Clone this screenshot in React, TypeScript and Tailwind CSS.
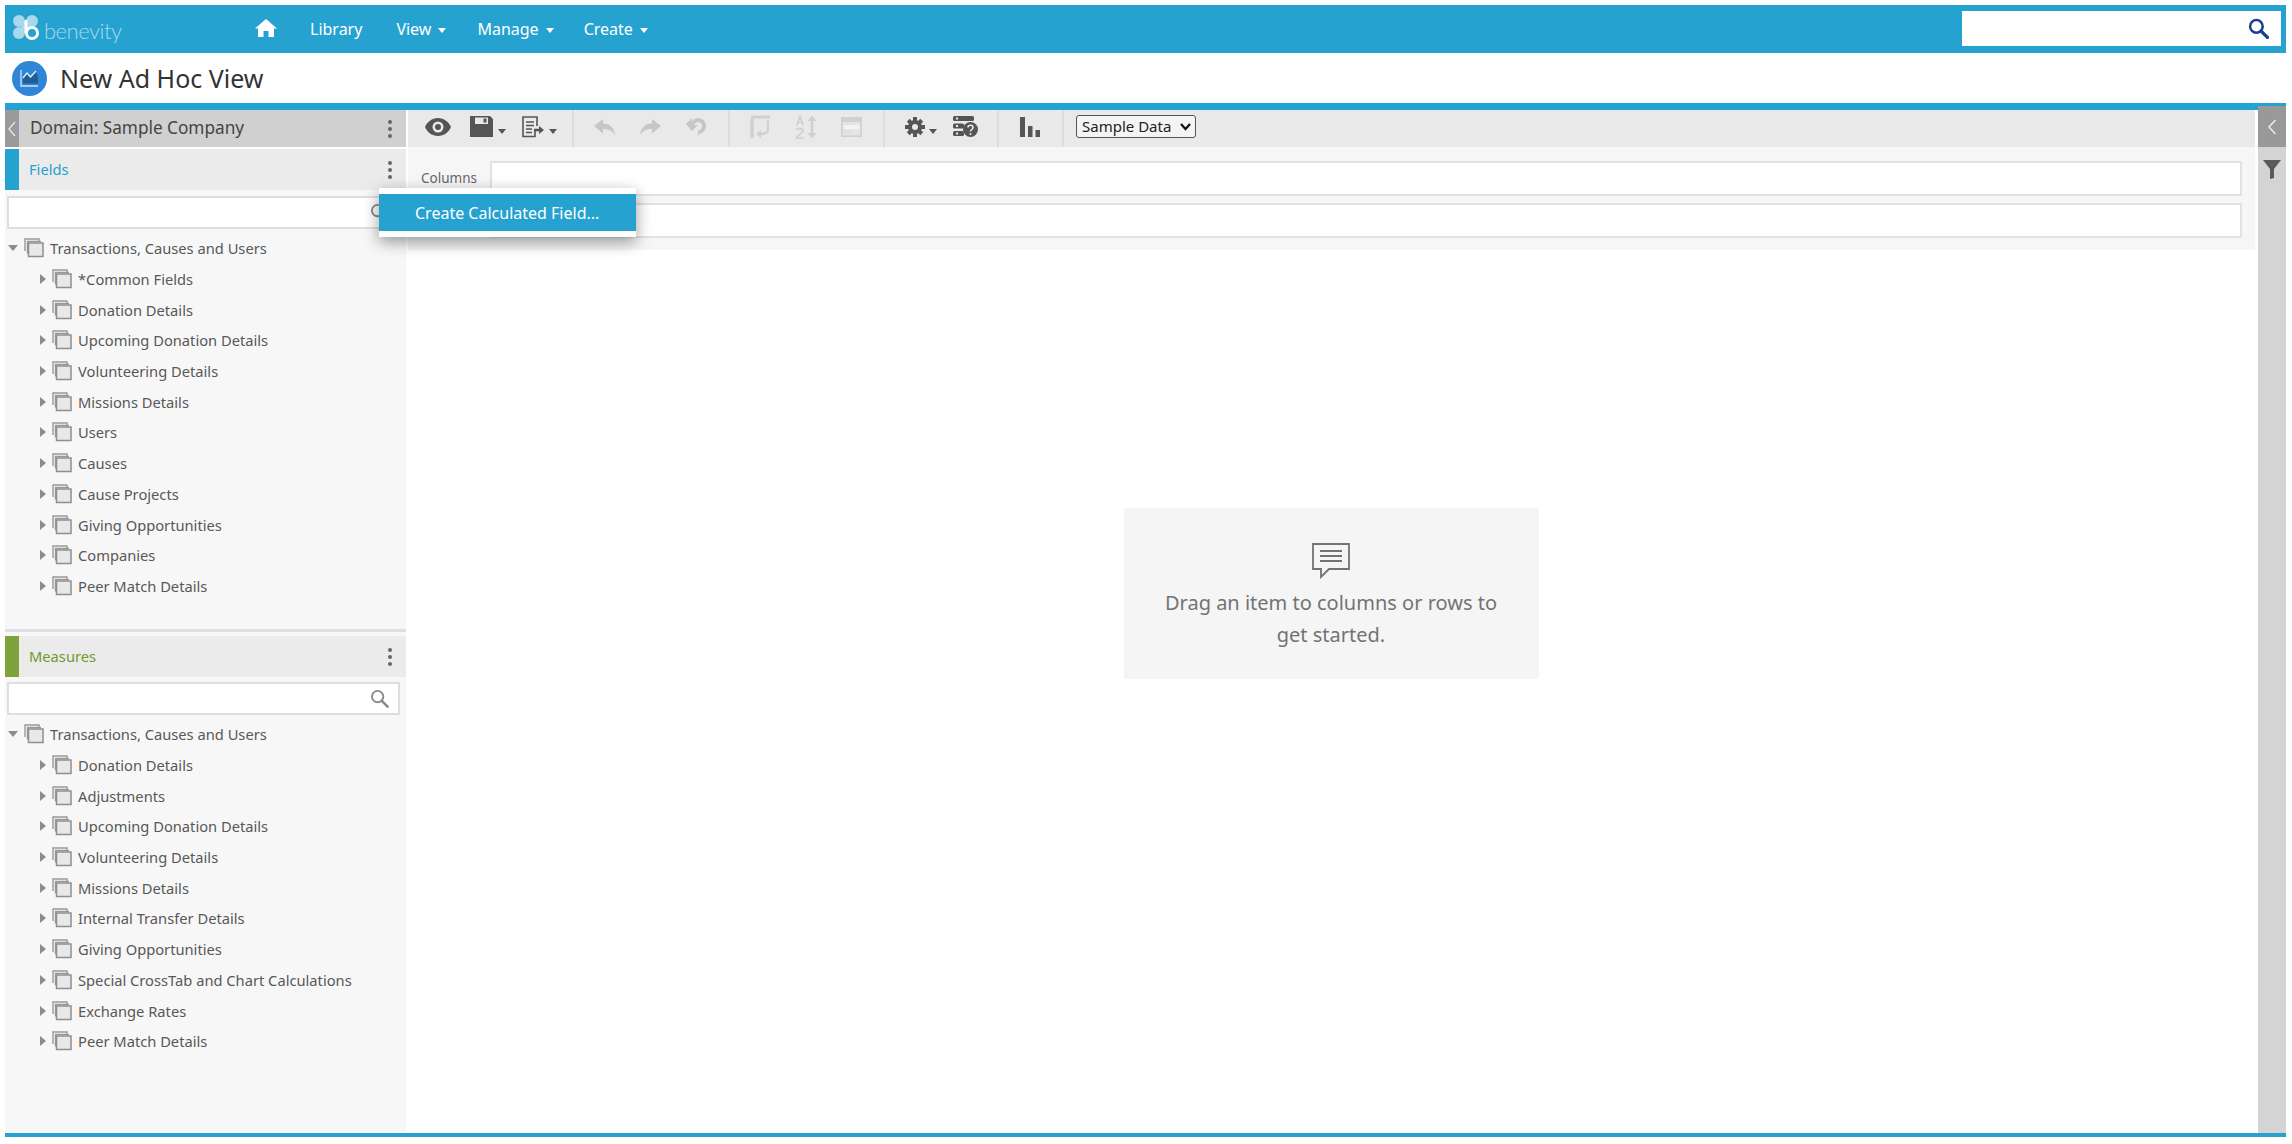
const fieldItems = [
  "*Common Fields",
  "Donation Details",
  "Upcoming Donation Details",
  "Volunteering Details",
  "Missions Details",
  "Users",
  "Causes",
  "Cause Projects",
  "Giving Opportunities",
  "Companies",
  "Peer Match Details",
];

const measureItems = [
  "Donation Details",
  "Adjustments",
  "Upcoming Donation Details",
  "Volunteering Details",
  "Missions Details",
  "Internal Transfer Details",
  "Giving Opportunities",
  "Special CrossTab and Chart Calculations",
  "Exchange Rates",
  "Peer Match Details",
];

const Caret = ({ className = "border-t-white" }: { className?: string }) => (
  <span className={`inline-block w-0 h-0 border-x-[4.5px] border-x-transparent border-t-[5px] ${className}`} />
);

const Dots = () => (
  <div className="flex flex-col gap-[3px] mr-[14px]">
    <span className="w-[4px] h-[4px] rounded-full bg-[#666]" />
    <span className="w-[4px] h-[4px] rounded-full bg-[#666]" />
    <span className="w-[4px] h-[4px] rounded-full bg-[#666]" />
  </div>
);

const SearchIcon = ({ color = "#8a8a8a", size = 20, width = 2 }: { color?: string; size?: number; width?: number }) => (
  <svg width={size} height={size} viewBox="0 0 20 20" fill="none" stroke={color} strokeWidth={width}>
    <circle cx="8" cy="8" r="6" />
    <path d="M12.5 12.5 L18.5 18.5" strokeWidth={width + 0.8} strokeLinecap="round" />
  </svg>
);

const FolderIcon = () => (
  <svg width="20" height="20" viewBox="0 0 20 20" fill="none" className="shrink-0">
    <path d="M1 13 V1 H15 V3.5" stroke="#999" strokeWidth="1.4" />
    <path d="M3.5 15.5 V3.5 H17" stroke="#999" strokeWidth="1.4" />
    <rect x="4.5" y="5" width="14.5" height="13.5" fill="#e8e8e8" stroke="#8f8f8f" strokeWidth="1.5" />
  </svg>
);

const TreeRow = ({ label, root = false }: { label: string; root?: boolean }) => (
  <div className={`h-[30.7px] flex items-center text-[14.7px] text-[#585858] whitespace-nowrap ${root ? "pl-[3px]" : "pl-[35px]"}`}>
    {root ? (
      <span className="w-0 h-0 border-x-[5px] border-x-transparent border-t-[6px] border-t-[#8c8c8c] mr-[6px]" />
    ) : (
      <span className="w-0 h-0 border-y-[5px] border-y-transparent border-l-[6px] border-l-[#8c8c8c] mr-[6px]" />
    )}
    <FolderIcon />
    <span className="ml-[6px]">{label}</span>
  </div>
);

const PanelSearch = ({ mt }: { mt: string }) => (
  <div className={`${mt} ml-[2px] mr-[6px] h-[33px] bg-white border-2 border-[#dedede] flex items-center justify-end pr-[9px] shrink-0`}>
    <SearchIcon size={19} />
  </div>
);

const PanelHeader = ({ title, stripe, text }: { title: string; stripe: string; text: string }) => (
  <div className="h-[41px] flex items-center bg-[#ebebeb] shrink-0">
    <div className={`w-[14px] h-full ${stripe}`} />
    <span className={`ml-[10px] flex-1 text-[14.7px] ${text}`}>{title}</span>
    <Dots />
  </div>
);

const Group = ({ className, children }: { className: string; children?: React.ReactNode }) => (
  <div className={`h-full flex items-center pb-[4px] border-r-2 border-[#dcdcdc] shrink-0 ${className}`}>{children}</div>
);

const ToolCaret = () => <Caret className="border-t-[#555] ml-[5px] mt-[9px]" />;

const Eye = () => (
  <svg width="26" height="18" viewBox="0 0 26 18">
    <path fillRule="evenodd" fill="#555" d="M13 0 C19 0 24 4 26 9 C24 14 19 18 13 18 C7 18 2 14 0 9 C2 4 7 0 13 0 Z M13 3.5 A5.5 5.5 0 1 0 13 14.5 A5.5 5.5 0 1 0 13 3.5 Z" />
    <circle cx="13" cy="9" r="3" fill="#555" />
  </svg>
);

const Save = () => (
  <svg width="23" height="21" viewBox="0 0 23 21">
    <path fill="#555" fillRule="evenodd" d="M0 0 H20 L23 3 V21 H0 Z M5 1.5 V8 H18 V1.5 Z" />
    <rect x="13.5" y="2.5" width="3" height="4" fill="#555" />
  </svg>
);

const ExportIcon = () => (
  <svg width="22" height="22" viewBox="0 0 22 22" fill="none" stroke="#555" strokeWidth="1.6">
    <path d="M13 15 V20.5 H1 V1 H15 V10" />
    <path d="M4 6 H12 M4 9.5 H12 M4 13 H10 M4 16.5 H10" />
    <path d="M12 14 H18" strokeWidth="2.5" />
    <path d="M17 10 L22 14 L17 18 Z" fill="#555" stroke="none" />
  </svg>
);

const UndoIcon = ({ flip = false }: { flip?: boolean }) => (
  <svg width="21" height="16" viewBox="0 0 21 16" className={flip ? "-scale-x-100" : ""}>
    <path fill="#c6c6c6" d="M9 0 V4.5 C16 4.5 20 9 21 16 C18 11.5 14 10 9 10 V14.5 L0 7 Z" />
  </svg>
);

const UndoAll = () => (
  <svg width="20" height="20" viewBox="0 0 20 20">
    <path fill="#c6c6c6" d="M6 1 V5 C7 3 9 1 12 1 C17 1 20 5 20 9 C20 13 17 16 13 17 L12 19 L12 14 C14.5 13.5 16 11.5 16 9 C16 6.5 14 5 12 5 C10 5 9 6 8 8 L12 8 L6 14 L0 7 Z" />
  </svg>
);

const SwitchIcon = () => (
  <svg width="22" height="24" viewBox="0 0 22 24" fill="none" stroke="#d0d0d0" strokeWidth="2.2">
    <path d="M3 23 V4" strokeWidth="3.6" />
    <path d="M2 2 H21" strokeWidth="3" />
    <path d="M19 5 V14 C19 18 15 19 11 19" />
    <path d="M12 15 L7 19 L12 23 Z" fill="#d0d0d0" stroke="none" />
  </svg>
);

const SortIcon = () => (
  <svg width="22" height="24" viewBox="0 0 22 24" fill="none" stroke="#d0d0d0" strokeWidth="1.7">
    <path d="M1.5 10.5 L5 1.5 L8.5 10.5 M3 7.5 H7" />
    <path d="M1.5 15 C2 13 8 13 8 15.5 C8 18 2 20 1.5 23 H8.5" />
    <path d="M17 3 V21" strokeWidth="2.6" />
    <path d="M12.5 6 L17 0.5 L21.5 6 Z M12.5 18 L17 23.5 L21.5 18 Z" fill="#d0d0d0" stroke="none" />
  </svg>
);

const WindowIcon = () => (
  <svg width="21" height="20" viewBox="0 0 21 20">
    <rect x="0.75" y="0.75" width="19.5" height="18.5" fill="#e4e4e4" stroke="#d0d0d0" strokeWidth="1.5" />
    <rect x="1" y="1" width="19" height="4" fill="#d0d0d0" />
    <rect x="3" y="8" width="15" height="4" fill="#f4f4f4" />
    <path d="M3 15 H5 M6.5 15 H8.5" stroke="#d0d0d0" strokeWidth="1.2" />
  </svg>
);

const Gear = () => (
  <svg width="20" height="20" viewBox="0 0 20 20">
    <g fill="#555">
      <path fillRule="evenodd" d="M10 3 A7 7 0 1 0 10 17 A7 7 0 1 0 10 3 Z M10 7 A3 3 0 1 1 10 13 A3 3 0 1 1 10 7 Z" />
      <rect x="8" y="0" width="4" height="4.5" />
      <rect x="8" y="15.5" width="4" height="4.5" />
      <rect x="0" y="8" width="4.5" height="4" />
      <rect x="15.5" y="8" width="4.5" height="4" />
      <rect x="8" y="0.5" width="4" height="4.5" transform="rotate(45 10 10)" />
      <rect x="8" y="15" width="4" height="4.5" transform="rotate(45 10 10)" />
      <rect x="0.5" y="8" width="4.5" height="4" transform="rotate(45 10 10)" />
      <rect x="15" y="8" width="4.5" height="4" transform="rotate(45 10 10)" />
    </g>
  </svg>
);

const DataHelp = () => (
  <svg width="25" height="21" viewBox="0 0 25 21">
    <rect x="0" y="0" width="21" height="5" rx="1.5" fill="#555" />
    <rect x="3" y="1.5" width="2" height="2" fill="#e9e9e9" />
    <rect x="0" y="7.5" width="11" height="5" rx="1.5" fill="#555" />
    <rect x="3" y="9" width="2" height="2" fill="#e9e9e9" />
    <rect x="0" y="15" width="11" height="5" rx="1.5" fill="#555" />
    <rect x="3" y="16.5" width="2" height="2" fill="#e9e9e9" />
    <circle cx="17.5" cy="13.5" r="7.5" fill="#555" />
    <path d="M15 11.5 C15 8.5 20 8.5 20 11.5 C20 13.5 17.5 13.5 17.5 15.5" fill="none" stroke="#e9e9e9" strokeWidth="1.6" />
    <circle cx="17.5" cy="18" r="1" fill="#e9e9e9" />
  </svg>
);

const Bars = () => (
  <svg width="20" height="20" viewBox="0 0 20 20" fill="#555">
    <rect x="0" y="0" width="5" height="20" />
    <rect x="8" y="9" width="4.5" height="11" />
    <rect x="15.5" y="13" width="4.5" height="7" />
  </svg>
);

const DropRow = ({ label }: { label?: string }) => (
  <div className="flex items-center h-[35px] shrink-0">
    <span className="w-[82px] pl-[13px] text-[13.5px] text-[#666]">{label}</span>
    <div className="flex-1 h-full bg-white border-2 border-[#e2e2e2]" />
  </div>
);

export default function App() {
  return (
    <div className="relative w-[2292px] h-[1144px] overflow-hidden bg-white pl-[5px] pr-[6px] pt-[5px] pb-[7px] flex flex-col font-['Noto_Sans',sans-serif]">
      {/* top nav */}
      <header className="h-[48px] bg-[#26a2d0] flex items-center shrink-0 text-white text-[16px] leading-none pb-[1px]">
        <div className="ml-[7px] flex items-center w-[110px] h-full relative">
          <svg width="30" height="30" viewBox="0 0 30 30" className="shrink-0 -mt-[2px]">
            <circle cx="7" cy="8" r="6" fill="#a8d8ec" />
            <circle cx="20" cy="8" r="6" fill="#a8d8ec" />
            <circle cx="7" cy="20" r="6" fill="#a8d8ec" />
            <circle cx="14" cy="14" r="5" fill="#a8d8ec" />
            <circle cx="20" cy="20" r="5.5" fill="#26a2d0" stroke="#fff" strokeWidth="3" />
            <path d="M14 7 V20" stroke="#fff" strokeWidth="3" />
          </svg>
          <span className="ml-[2px] mt-[5px] font-['Lato',sans-serif] font-light text-[22px] leading-none text-[#a8d8ec] tracking-[-0.5px]">benevity</span>
        </div>
        <svg width="22" height="18" viewBox="0 0 22 18" className="ml-[133px] shrink-0 -mt-[1px]">
          <path fill="#fff" d="M11 0 L22 9.5 H19 V18 H13.5 V12 H8.5 V18 H3 V9.5 H0 Z" />
        </svg>
        <span className="ml-[33px]">Library</span>
        <span className="ml-[34px]">View</span>
        <Caret className="border-t-white ml-[7px] mt-[3px]" />
        <span className="ml-[31px]">Manage</span>
        <Caret className="border-t-white ml-[7px] mt-[3px]" />
        <span className="ml-[30px]">Create</span>
        <Caret className="border-t-white ml-[7px] mt-[3px]" />
        <div className="ml-auto mr-[5px] w-[319px] h-[35px] bg-white flex items-center justify-end pr-[12px]">
          <SearchIcon color="#17418c" size={21} width={2.4} />
        </div>
      </header>

      {/* title */}
      <div className="h-[50px] flex items-center shrink-0">
        <svg width="35" height="35" viewBox="0 0 35 35" className="ml-[7px] shrink-0">
          <circle cx="17.5" cy="17.5" r="17.5" fill="#2f86d6" />
          <path d="M9 9 V25 H26" fill="none" stroke="#cfe4f6" strokeWidth="1.3" />
          <path d="M11 22.5 V17 L15 12 L18.5 16 L24 10 L26 16 V22.5 Z" fill="#1f5f96" />
          <path d="M11 17 L15 12 L18.5 16 L24 10" fill="none" stroke="#e6f1fb" strokeWidth="1.3" />
        </svg>
        <h1 className="ml-[13px] text-[25px] text-[#333] leading-none">New Ad Hoc View</h1>
      </div>
      <div className="h-[7px] bg-[#26a2d0] shrink-0" />

      {/* body */}
      <div className="flex-1 flex min-h-0">
        <aside className="w-[401px] shrink-0 flex flex-col bg-[#f7f7f7]">
          <div className="h-[37px] bg-[#d0d0d0] flex items-center shrink-0">
            <div className="w-[14px] h-full bg-[#9a9a9a] flex items-center justify-center text-white">
              <svg width="8" height="16" viewBox="0 0 8 16" fill="none" stroke="#e8e8e8" strokeWidth="1.3"><path d="M7 1 L1 8 L7 15" /></svg>
            </div>
            <span className="ml-[11px] flex-1 text-[17.2px] leading-none pb-[2px] text-[#444]">Domain: Sample Company</span>
            <Dots />
          </div>
          <div className="h-[2px] bg-white shrink-0" />
          <section className="h-[480px] shrink-0 flex flex-col">
            <PanelHeader title="Fields" stripe="bg-[#26a2d0]" text="text-[#26a2d0]" />
            <PanelSearch mt="mt-[6px]" />
            <div className="mt-[4px]">
              <TreeRow root label="Transactions, Causes and Users" />
              {fieldItems.map((item) => (
                <TreeRow key={item} label={item} />
              ))}
            </div>
          </section>
          <div className="h-[3px] bg-[#dfdfdf] shrink-0" />
          <div className="h-[4px] shrink-0" />
          <PanelHeader title="Measures" stripe="bg-[#7ea33c]" text="text-[#6e9a2b]" />
          <PanelSearch mt="mt-[5px]" />
          <div className="mt-[4px]">
            <TreeRow root label="Transactions, Causes and Users" />
            {measureItems.map((item) => (
              <TreeRow key={item} label={item} />
            ))}
          </div>
        </aside>

        <main className="flex-1 min-w-0 flex flex-col ml-[2px]">
          <div className="mr-[3px] h-[37px] bg-[#e9e9e9] flex items-center shrink-0">
            <Group className="w-[166px] pl-[17px]">
              <Eye />
              <span className="ml-[19px] flex items-center"><Save /><ToolCaret /></span>
              <span className="ml-[16px] flex items-center"><ExportIcon /><ToolCaret /></span>
            </Group>
            <Group className="w-[156px] pl-[20px] gap-[25px]">
              <UndoIcon />
              <UndoIcon flip />
              <UndoAll />
            </Group>
            <Group className="w-[155px] pl-[19px] gap-[24px]">
              <SwitchIcon />
              <SortIcon />
              <WindowIcon />
            </Group>
            <Group className="w-[114px] pl-[20px]">
              <Gear />
              <Caret className="border-t-[#555] ml-[4px] mt-[9px]" />
              <span className="ml-[16px] flex"><DataHelp /></span>
            </Group>
            <Group className="w-[65px] pl-[21px]">
              <Bars />
            </Group>
            <div className="ml-[12px] mb-[4px] w-[120px] h-[23px] bg-[#f4f4f4] border border-[#555] rounded-[3px] flex items-center pl-[5px] text-[15px] text-[#222]">
              <span className="flex-1 whitespace-nowrap">Sample Data</span>
              <svg width="11" height="8" viewBox="0 0 11 8" fill="none" stroke="#111" strokeWidth="2.2" className="mr-[4px]"><path d="M1 1 L5.5 6 L10 1" /></svg>
            </div>
          </div>

          <div className="mr-[3px] h-[103px] bg-[#f6f6f6] pt-[14px] pr-[13px] flex flex-col gap-[7px] shrink-0">
            <DropRow label="Columns" />
            <DropRow />
          </div>

          <div className="flex-1 flex justify-center pt-[258px] pr-[4px]">
            <div className="w-[415px] h-[171px] bg-[#f5f5f5] flex flex-col items-center pt-[35px] text-[20px] leading-[32px] text-[#737373] text-center">
              <svg width="38" height="36" viewBox="0 0 38 36" fill="none" stroke="#737373" strokeWidth="1.8" className="mb-[8px]">
                <path d="M1 1 H37 V26 H17 L9 34 V26 H1 Z" />
                <path d="M8 8 H30 M8 13 H30 M8 18 H30" />
              </svg>
              <span className="w-[350px]">Drag an item to columns or rows to get started.</span>
            </div>
          </div>
        </main>

        <div className="w-[28px] -mt-[4px] shrink-0 bg-[#d4d4d4] flex flex-col items-center">
          <div className="w-full h-[41px] bg-[#999] flex items-center justify-center shrink-0">
            <svg width="10" height="18" viewBox="0 0 10 18" fill="none" stroke="#eee" strokeWidth="1.4"><path d="M8.5 2 L2 9 L8.5 16" /></svg>
          </div>
          <svg width="18" height="19" viewBox="0 0 18 19" className="mt-[13px]">
            <path fill="#5a5a5a" d="M0 0 H18 L11 9 V18 L7 19 V9 Z" />
          </svg>
        </div>
      </div>

      <div className="h-[4px] bg-[#26a2d0] shrink-0" />

      {/* fields menu */}
      <div className="absolute left-[379px] top-[188px] w-[257px] h-[49px] bg-white py-[6px] shadow-[0_5px_16px_rgba(0,0,0,0.4)]">
        <div className="h-full bg-[#26a2d0] pl-[36px] flex items-center text-[16px] text-white whitespace-nowrap">Create Calculated Field...</div>
      </div>
    </div>
  );
}
